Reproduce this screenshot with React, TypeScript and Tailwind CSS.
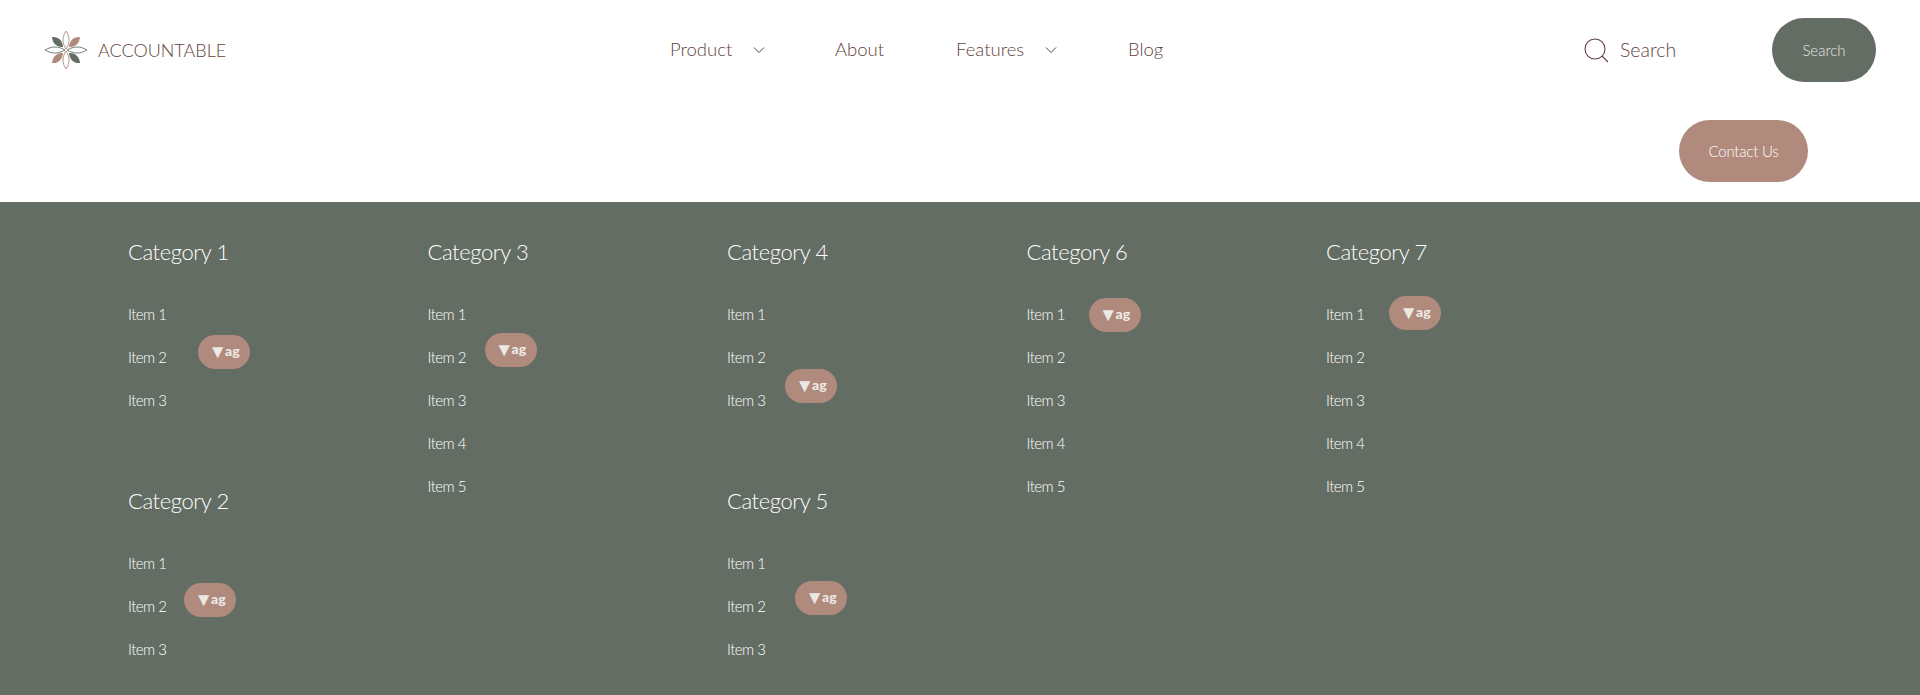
const font = "font-['Lato','Liberation_Sans',sans-serif]";

type Category = {
  title: string;
  count: number;
  tagRow: number;
  tagClass: string;
};

const columns: Category[][] = [
  [
    { title: "Category 1", count: 3, tagRow: 1, tagClass: "left-[70px] top-[-11px]" },
    { title: "Category 2", count: 3, tagRow: 1, tagClass: "left-[56px] top-[-12px]" },
  ],
  [{ title: "Category 3", count: 5, tagRow: 1, tagClass: "left-[57px] top-[-13px]" }],
  [
    { title: "Category 4", count: 3, tagRow: 2, tagClass: "left-[58px] top-[-20px]" },
    { title: "Category 5", count: 3, tagRow: 1, tagClass: "left-[68px] top-[-14px]" },
  ],
  [{ title: "Category 6", count: 5, tagRow: 0, tagClass: "left-[62px] top-[-5px]" }],
  [{ title: "Category 7", count: 5, tagRow: 0, tagClass: "left-[63px] top-[-7px]" }],
];

function Logo() {
  return (
    <svg width="44" height="40" viewBox="0 0 44 40" fill="none">
      <g stroke="#b08a7c" strokeWidth="0.9">
        <path d="M22 1 C18 7 18 13 22 19 C26 13 26 7 22 1 Z" />
        <path d="M22 39 C18 33 18 27 22 21 C26 27 26 33 22 39 Z" />
      </g>
      <g stroke="#646d63" strokeWidth="0.9">
        <path d="M1 20 C8 16 14 16 21 20 C14 24 8 24 1 20 Z" />
        <path d="M43 20 C36 16 30 16 23 20 C30 24 36 24 43 20 Z" />
      </g>
      <path d="M8 7 C14 6.5 18.5 10 19 17 C12.5 17.5 8.5 13 8 7 Z" fill="#646d63" />
      <path d="M36 33 C30 33.5 25.5 30 25 23 C31.5 22.5 35.5 27 36 33 Z" fill="#646d63" />
      <path d="M36 7 C30 6.5 25.5 10 25 17 C31.5 17.5 35.5 13 36 7 Z" fill="#b08a7c" />
      <path d="M8 33 C14 33.5 18.5 30 19 23 C12.5 22.5 8.5 27 8 33 Z" fill="#b08a7c" />
    </svg>
  );
}

function Chevron() {
  return (
    <svg width="12" height="8" viewBox="0 0 12 8" fill="none" stroke="#5f433b" strokeWidth="1">
      <path d="M1 1.5 L6 6.5 L11 1.5" />
    </svg>
  );
}

function NavItem({ label, chevron, className }: { label: string; chevron?: boolean; className: string }) {
  return (
    <div className={`flex items-center ${className}`}>
      <span className="text-[18.5px] font-light text-[#5f433b]">{label}</span>
      {chevron && (
        <span className="ml-[21px] flex">
          <Chevron />
        </span>
      )}
    </div>
  );
}

function Header() {
  return (
    <header className="h-[202px] bg-white">
      <div className="flex h-[100px] items-center pl-[44px]">
        <div className="flex w-[626px] items-center gap-[10px]">
          <Logo />
          <span className="text-[18px] font-light text-[#5f433b]">ACCOUNTABLE</span>
        </div>
        <NavItem label="Product" chevron className="w-[165px]" />
        <NavItem label="About" className="w-[121px]" />
        <NavItem label="Features" chevron className="w-[172px]" />
        <NavItem label="Blog" className="w-[456px]" />
        <div className="flex w-[188px] items-center gap-[11px]">
          <svg width="25" height="25" viewBox="0 0 25 25" fill="none" stroke="#5f433b" strokeWidth="1.1">
            <circle cx="11" cy="11" r="10" />
            <path d="M18 18 L24 24" />
          </svg>
          <span className="text-[19.5px] font-light text-[#5f433b]">Search</span>
        </div>
        <button className="flex h-[64px] w-[104px] items-center justify-center rounded-[32px] bg-[#646d63] text-[15px] font-light text-[#e5e5e1]">
          Search
        </button>
      </div>
      <div className="flex justify-end pt-[20px] pr-[112px]">
        <button className="flex h-[62px] w-[129px] items-center justify-center rounded-[31px] bg-[#b08a7c] text-[15px] font-light tracking-[-0.2px] text-white">
          Contact Us
        </button>
      </div>
    </header>
  );
}

function Group({ title, count, tagRow, tagClass }: Category) {
  return (
    <div className="h-[249px]">
      <h3 className="flex h-[33px] items-center text-[22px] font-light tracking-[-0.4px] text-white">{title}</h3>
      <ul className="mt-[25px] flex flex-col">
        {Array.from({ length: count }, (_, i) => (
          <li key={i} className="flex h-[43px] items-center text-[15px] font-light tracking-[-0.5px] text-white">
            <span className="relative">
              Item {i + 1}
              {i === tagRow && (
                <span
                  className={`absolute flex h-[34px] w-[52px] items-center justify-center rounded-[17px] bg-[#b08a7c] pb-[4px] text-[14px] font-black tracking-normal text-[#ece8e4] ${tagClass}`}
                >
                  <span className="-mr-[2px] text-[19px] leading-none">▼</span>ag
                </span>
              )}
            </span>
          </li>
        ))}
      </ul>
    </div>
  );
}

export default function App() {
  return (
    <div className={`h-[695px] overflow-hidden ${font}`}>
      <Header />
      <main className="flex h-[493px] bg-[#646d63] pt-[33px] pl-[128px]">
        {columns.map((groups, i) => (
          <div key={i} className="w-[299.5px] shrink-0">
            {groups.map((group) => (
              <Group key={group.title} {...group} />
            ))}
          </div>
        ))}
      </main>
    </div>
  );
}
